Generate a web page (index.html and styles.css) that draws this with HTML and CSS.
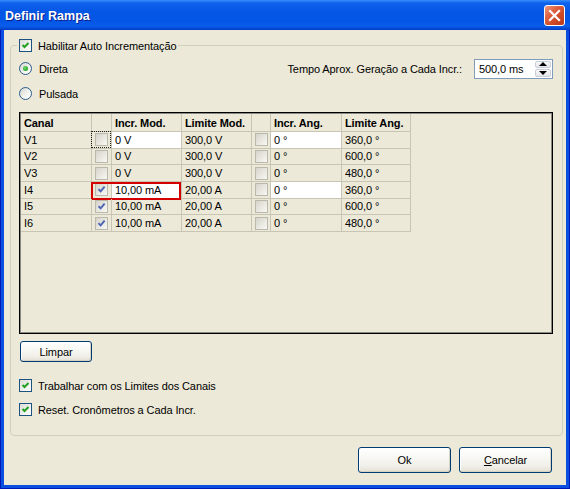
FILE: index.html
```html
<!DOCTYPE html>
<html lang="pt">
<head>
<meta charset="utf-8">
<title>Definir Rampa</title>
<link rel="stylesheet" href="styles.css">
</head>
<body>
<div class="window">
  <div class="titlebar">
    <span class="title">Definir Rampa</span>
    <span class="close">
      <svg width="19" height="19" viewBox="0 0 19 19"><path d="M5 5 L14 14 M14 5 L5 14" stroke="#fff" stroke-width="2.2" stroke-linecap="square"/></svg>
    </span>
  </div>
  <div class="frame">
    <div class="client">
      <div class="group">
        <div class="legend">
          <span class="cb"><svg width="11" height="11" viewBox="0 0 11 11"><path d="M2.5 5 L4.5 7 L8.5 3" stroke="#21A121" stroke-width="2" fill="none"/></svg></span>
          <span>Habilitar Auto Incrementação</span>
        </div>
        <div class="mode-row">
          <span class="radio on"></span>
          <span class="rlabel">Direta</span>
          <div class="tempo">
            <span>Tempo Aprox. Geração a Cada Incr.:</span>
            <div class="spin">
              <span class="spin-val">500,0 ms</span>
              <span class="spin-btns"><span class="sb"><i class="up"></i></span><span class="sb"><i class="down"></i></span></span>
            </div>
          </div>
        </div>
        <div class="pulsada-row">
          <span class="radio"></span>
          <span class="rlabel">Pulsada</span>
        </div>

        <div class="gridbox">
          <div class="trow head">
            <div class="c w1">Canal</div><div class="c w2"></div><div class="c w3">Incr. Mod.</div><div class="c w4">Limite Mod.</div><div class="c w5"></div><div class="c w6">Incr. Ang.</div><div class="c w7">Limite Ang.</div>
          </div>
          <div class="trow">
            <div class="c w1">V1</div>
            <div class="c w2 chk focus"><span class="gcb"></span></div>
            <div class="c w3 edit">0 V</div>
            <div class="c w4">300,0 V</div>
            <div class="c w5 chk"><span class="gcb"></span></div>
            <div class="c w6 edit">0 °</div>
            <div class="c w7">360,0 °</div>
          </div>
          <div class="trow">
            <div class="c w1">V2</div>
            <div class="c w2 chk"><span class="gcb"></span></div>
            <div class="c w3">0 V</div>
            <div class="c w4">300,0 V</div>
            <div class="c w5 chk"><span class="gcb"></span></div>
            <div class="c w6">0 °</div>
            <div class="c w7">600,0 °</div>
          </div>
          <div class="trow">
            <div class="c w1">V3</div>
            <div class="c w2 chk"><span class="gcb"></span></div>
            <div class="c w3">0 V</div>
            <div class="c w4">300,0 V</div>
            <div class="c w5 chk"><span class="gcb"></span></div>
            <div class="c w6">0 °</div>
            <div class="c w7">480,0 °</div>
          </div>
          <div class="trow marked">
            <div class="c w1">I4</div>
            <div class="c w2 chk"><span class="gcb"><svg width="11" height="11" viewBox="0 0 11 11"><path d="M2.5 5.2 L4.6 7.4 L8.6 2.6" stroke="#4B63B5" stroke-width="1.9" fill="none"/></svg></span></div>
            <div class="c w3 edit">10,00 mA</div>
            <div class="c w4">20,00 A</div>
            <div class="c w5 chk"><span class="gcb"></span></div>
            <div class="c w6 edit">0 °</div>
            <div class="c w7">360,0 °</div>
            <span class="redbox"></span>
          </div>
          <div class="trow">
            <div class="c w1">I5</div>
            <div class="c w2 chk"><span class="gcb"><svg width="11" height="11" viewBox="0 0 11 11"><path d="M2.5 5.2 L4.6 7.4 L8.6 2.6" stroke="#4B63B5" stroke-width="1.9" fill="none"/></svg></span></div>
            <div class="c w3">10,00 mA</div>
            <div class="c w4">20,00 A</div>
            <div class="c w5 chk"><span class="gcb"></span></div>
            <div class="c w6">0 °</div>
            <div class="c w7">600,0 °</div>
          </div>
          <div class="trow">
            <div class="c w1">I6</div>
            <div class="c w2 chk"><span class="gcb"><svg width="11" height="11" viewBox="0 0 11 11"><path d="M2.5 5.2 L4.6 7.4 L8.6 2.6" stroke="#4B63B5" stroke-width="1.9" fill="none"/></svg></span></div>
            <div class="c w3">10,00 mA</div>
            <div class="c w4">20,00 A</div>
            <div class="c w5 chk"><span class="gcb"></span></div>
            <div class="c w6">0 °</div>
            <div class="c w7">480,0 °</div>
          </div>
        </div>

        <button class="btn limpar">Limpar</button>

        <div class="check-row first">
          <span class="cb"><svg width="11" height="11" viewBox="0 0 11 11"><path d="M2.5 5 L4.5 7 L8.5 3" stroke="#21A121" stroke-width="2" fill="none"/></svg></span>
          <span>Trabalhar com os Limites dos Canais</span>
        </div>
        <div class="check-row second">
          <span class="cb"><svg width="11" height="11" viewBox="0 0 11 11"><path d="M2.5 5 L4.5 7 L8.5 3" stroke="#21A121" stroke-width="2" fill="none"/></svg></span>
          <span>Reset. Cronômetros a Cada Incr.</span>
        </div>
      </div>
      <div class="actions">
        <button class="btn action">Ok</button>
        <button class="btn action"><u>C</u>ancelar</button>
      </div>
    </div>
  </div>
</div>
</body>
</html>
```

FILE: styles.css
```css
* { box-sizing: border-box; }
html, body { margin: 0; padding: 0; }
body {
  width: 570px;
  height: 489px;
  overflow: hidden;
  font-family: "Liberation Sans", Arial, sans-serif;
  font-size: 11px;
  letter-spacing: -0.1px;
  color: #000;
  background: #ECE9D8;
}

.window {
  width: 570px;
  height: 489px;
  display: flex;
  flex-direction: column;
}

.titlebar {
  height: 30px;
  flex: none;
  display: flex;
  align-items: center;
  justify-content: space-between;
  padding: 1px 5px 0 5px;
  background: linear-gradient(to bottom, #3A8DFA 0px, #0E62EC 3px, #0556E4 12px, #0457E6 22px, #0A5EEB 26px, #0446CF 29px, #0036BE 30px);
}
.title {
  color: #fff;
  font-weight: bold;
  font-size: 12.5px;
  letter-spacing: 0;
  text-shadow: 1px 1px 0 #0A1E8C;
}
.close {
  width: 21px;
  height: 21px;
  margin-top: -1px;
  border: 1px solid #fff;
  border-radius: 3px;
  background: linear-gradient(135deg, #EE9B84 0%, #DE6243 35%, #CF4B26 65%, #B8361A 100%);
  display: flex;
  align-items: center;
  justify-content: center;
}
.close svg { display: block; }

.frame {
  flex: 1;
  display: flex;
  padding: 0 4px 4px 4px;
  background: #ECE9D8;
  box-shadow:
    inset 1px 0 0 #0019B8,
    inset -1px 0 0 #0019B8,
    inset 0 -1px 0 #0019B8,
    inset 4px 0 0 #0A4FDF,
    inset -4px 0 0 #0A4FDF,
    inset 0 -4px 0 #0A4FDF;
}

.client {
  flex: 1;
  display: flex;
  flex-direction: column;
  padding: 15px 5px 0 6px;
}

.group {
  height: 391px;
  border: 1px solid #D0D0BF;
  border-radius: 4px;
  padding: 0 9px 0 8px;
  display: flex;
  flex-direction: column;
  align-items: flex-start;
}

.legend {
  margin: -7px 0 0 -2px;
  padding: 0 2px;
  height: 13px;
  background: #ECE9D8;
  display: flex;
  align-items: center;
  gap: 6px;
}

.cb {
  width: 13px;
  height: 13px;
  flex: none;
  border: 1px solid #1C5180;
  background: linear-gradient(135deg, #DCDCD7 0%, #F5F5F2 70%, #FFFFFF 100%);
  display: flex;
  align-items: center;
  justify-content: center;
}
.cb svg { display: block; }

.radio {
  width: 13px;
  height: 13px;
  flex: none;
  border-radius: 50%;
  border: 1px solid #2B5C8C;
  background: linear-gradient(135deg, #D6D6D0 0%, #F4F4F0 60%, #FFFFFF 100%);
  display: flex;
  align-items: center;
  justify-content: center;
}
.radio.on::after {
  content: "";
  width: 5px;
  height: 5px;
  border-radius: 50%;
  background: radial-gradient(circle at 40% 40%, #7BDB7B 0%, #2FB02F 55%, #168F16 100%);
}
.rlabel { margin-left: 7px; }

.mode-row {
  align-self: stretch;
  margin-top: 6px;
  height: 21px;
  display: flex;
  align-items: center;
}
.tempo {
  margin-left: auto;
  display: flex;
  align-items: center;
  gap: 12px;
}
.spin {
  width: 79px;
  height: 20px;
  border: 1px solid #7F9DB9;
  background: #fff;
  display: flex;
  padding: 1px;
}
.spin-val {
  flex: 1;
  padding-left: 3px;
  line-height: 16px;
}
.spin-btns {
  width: 16px;
  display: flex;
  flex-direction: column;
  gap: 1px;
}
.sb {
  flex: 1;
  border: 1px solid #C9CED8;
  border-radius: 2px;
  background: linear-gradient(#F8F8F8, #E4E6EA);
  display: flex;
  align-items: center;
  justify-content: center;
}
.sb i { width: 0; height: 0; border-left: 4px solid transparent; border-right: 4px solid transparent; }
.sb i.up { border-bottom: 4px solid #000; }
.sb i.down { border-top: 4px solid #000; }

.pulsada-row {
  margin-top: 6px;
  height: 17px;
  display: flex;
  align-items: center;
}

.gridbox {
  margin-top: 10px;
  width: 534px;
  height: 222px;
  flex: none;
  border: 1px solid #000;
  box-shadow: inset 0 0 0 1px #8A8A84;
  padding: 1px;
  display: flex;
  flex-direction: column;
}
.trow {
  display: flex;
  height: 16.667px;
  flex: none;
  position: relative;
}
.trow.head { height: 18px; font-weight: bold; }
.c {
  border-right: 1px solid #C8C5B5;
  border-bottom: 1px solid #C8C5B5;
  padding-left: 3px;
  display: flex;
  align-items: center;
  white-space: nowrap;
  position: relative;
}
.head .c { padding-top: 1px; }
.w1 { width: 71px; }
.w2 { width: 20px; }
.w3 { width: 70px; }
.w4 { width: 70px; }
.w5 { width: 19px; }
.w6 { width: 71px; }
.w7 { width: 69px; }
.c.chk { padding-left: 0; justify-content: center; }
.c.edit { background: #fff; }
.c.focus::after {
  content: "";
  position: absolute;
  top: -1px;
  left: -1px;
  right: 0;
  bottom: 0;
  border: 1px dotted #222;
}
.gcb {
  width: 13px;
  height: 13px;
  border: 1px solid #BAB8AC;
  background: linear-gradient(135deg, #D5D3C9 0%, #E9E8E1 55%, #F8F8F5 100%);
  display: flex;
  align-items: center;
  justify-content: center;
}
.gcb svg { display: block; }

.redbox {
  position: absolute;
  left: 70px;
  top: 0;
  width: 90px;
  height: 18px;
  border: 2px solid #D40000;
  pointer-events: none;
}

.btn {
  font-family: inherit;
  font-size: 11px;
  letter-spacing: -0.1px;
  color: #000;
  border: 1px solid #003C74;
  border-radius: 3px;
  background: linear-gradient(to bottom, #FFFFFF 0%, #FBFBF9 25%, #F0EFE8 75%, #E3E0D5 100%);
  box-shadow: inset -1px -1px 0 #D8D2C3, inset 1px 1px 0 #FFFFFF;
  padding: 0;
}
.limpar {
  margin: 7px 0 0 1px;
  width: 72px;
  height: 21px;
}

.check-row {
  height: 13px;
  display: flex;
  align-items: center;
  gap: 6px;
}
.check-row.first { margin-top: 17px; }
.check-row.second { margin-top: 11px; }

.actions {
  margin-top: 11px;
  margin-right: 11px;
  display: flex;
  justify-content: flex-end;
  gap: 8px;
}
.action {
  width: 93px;
  height: 26px;
}
.action u { text-decoration: underline; }
```
